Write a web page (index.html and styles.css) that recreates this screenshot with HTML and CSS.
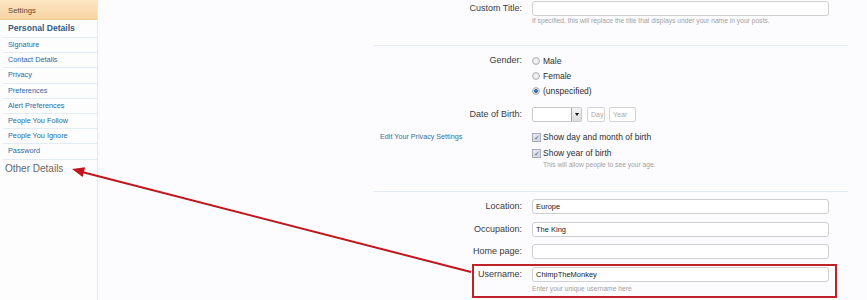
FILE: index.html
```html
<!DOCTYPE html>
<html>

<head>
	<link rel="stylesheet" href="styles.css">
</head>

<body>
	<div class="page">
		<div class="sidebar">
			<div class="sideHead">Settings</div>
			<div class="sideTitle">Personal Details</div>
			<ul class="sideNav">
				<li>Signature</li>
				<li>Contact Details</li>
				<li>Privacy</li>
				<li>Preferences</li>
				<li>Alert Preferences</li>
				<li>People You Follow</li>
				<li>People You Ignore</li>
				<li>Password</li>
			</ul>
			<div class="sideOther">Other Details</div>
		</div>

		<div class="main">
			<div class="form">
				<!-- Titel -->
				<div class="group groupTitle">
					<div class="row">
						<label class="label">Custom Title:</label>
						<div class="control">
							<div class="input"></div>
							<div class="hint">If specified, this will replace the title that displays under your name in your posts.</div>
						</div>
					</div>
				</div>

				<!-- Geschlecht / Geburtstag -->
				<div class="group groupPersonal">
					<div class="row">
						<label class="label">Gender:</label>
						<div class="control">
							<div class="option"><span class="radio"></span>Male</div>
							<div class="option"><span class="radio"></span>Female</div>
							<div class="option"><span class="radio checked"></span>(unspecified)</div>
						</div>
					</div>
					<div class="row rowDob">
						<label class="label">Date of Birth:</label>
						<div class="control dob">
							<div class="select"><span class="selectBtn"><span class="tri"></span></span></div>
							<div class="small day">Day</div>
							<div class="small year">Year</div>
						</div>
					</div>
					<div class="row rowPrivacy">
						<div class="label privacyLink">Edit Your Privacy Settings</div>
						<div class="control">
							<div class="option check"><span class="box">&#10003;</span>Show day and month of birth</div>
							<div class="option check"><span class="box">&#10003;</span>Show year of birth</div>
							<div class="hint indent">This will allow people to see your age.</div>
						</div>
					</div>
				</div>

				<!-- Weitere Angaben -->
				<div class="group groupMore">
					<div class="row field">
						<label class="label">Location:</label>
						<div class="control"><div class="input">Europe</div></div>
					</div>
					<div class="row field">
						<label class="label">Occupation:</label>
						<div class="control"><div class="input">The King</div></div>
					</div>
					<div class="row field">
						<label class="label">Home page:</label>
						<div class="control"><div class="input"></div></div>
					</div>
					<div class="row field marked">
						<label class="label">Username:</label>
						<div class="control">
							<div class="input">ChimpTheMonkey</div>
							<div class="hint">Enter your unique username here</div>
						</div>
					</div>
				</div>
			</div>
		</div>

		<svg class="arrow" width="867" height="300" viewBox="0 0 867 300">
			<line x1="471" y1="272" x2="82" y2="172" stroke="#c0161d" stroke-width="2" />
			<polygon points="72,169 85.2,167.2 82.6,177" fill="#c0161d" />
		</svg>
	</div>
</body>

</html>
```

FILE: styles.css
```css
body {
	margin: 0;
	background-color: #fcfcfe;
	font-family: "Liberation Sans", Arial, sans-serif;
	color: #444;
	overflow: hidden;
}

.page {
	display: flex;
	position: relative;
	width: 867px;
	height: 300px;
}

/* Seitenleiste */
.sidebar {
	width: 97px;
	height: 300px;
	border-right: 1px solid #e2e8f1;
	background-color: #fdfdfe;
}

.sideHead {
	height: 19px;
	line-height: 22px;
	padding-left: 8px;
	font-size: 7.7px;
	color: #5e4a33;
	background: linear-gradient(#fce6c4, #f7d4a2);
	border-bottom: 1px solid #efcb95;
}

.sideTitle {
	height: 17px;
	line-height: 17px;
	margin-left: 3px;
	padding-left: 5px;
	font-size: 8.6px;
	font-weight: bold;
	color: #2f5b82;
	border-bottom: 1px solid #e4ebf2;
}

.sideNav {
	list-style: none;
	margin: 0 0 0 3px;
	padding: 0;
}

.sideNav li {
	height: 14.2px;
	line-height: 14px;
	padding-left: 5px;
	font-size: 7.3px;
	color: #2a6aa0;
	border-bottom: 1px solid #e4ebf2;
}

.sideOther {
	margin-top: 2px;
	padding-left: 5px;
	font-size: 10px;
	line-height: 14px;
	color: #666;
}

/* Formular */
.main {
	flex: 1;
	padding-left: 275px;
}

.form {
	width: 475px;
}

.group {
	border-bottom: 1px solid #e4eaf6;
}

.groupTitle {
	padding-top: 1px;
	padding-bottom: 19px;
}

.groupPersonal {
	padding-top: 7px;
	padding-bottom: 22px;
}

.groupMore {
	padding-top: 7px;
	border-bottom: none;
}

.row {
	display: grid;
	grid-template-columns: 149px 297px;
	column-gap: 10px;
}

.label {
	text-align: right;
	font-size: 9px;
	line-height: 15px;
	color: #3a3a3a;
}

.input {
	box-sizing: border-box;
	height: 15px;
	line-height: 13px;
	padding-left: 3px;
	font-size: 7.5px;
	color: #222;
	background-color: #fff;
	border: 1px solid #cfcfcf;
	border-radius: 3px;
}

.hint {
	font-size: 6.7px;
	line-height: 10px;
	color: #a2a2a2;
}

.indent {
	padding-left: 11px;
	line-height: 8px;
}

.option {
	display: flex;
	align-items: center;
	height: 15px;
	font-size: 8.5px;
	color: #2e2e2e;
}

.radio {
	box-sizing: border-box;
	width: 8px;
	height: 8px;
	margin: 0 3px 0 0;
	border: 1px solid #b5b5b5;
	border-radius: 50%;
	background: radial-gradient(#fafafa, #d8d8d8);
}

.radio.checked {
	background: radial-gradient(circle, #2f6da6 0, #3d7ab3 1.6px, #cfd8e0 2.2px, #dde3e8 100%);
}

.check {
	height: 16px;
}

.box {
	box-sizing: border-box;
	width: 9px;
	height: 9px;
	margin-right: 2px;
	border: 1px solid #a9a9b3;
	background: linear-gradient(#e9e9f0, #d5d6e0);
	font-size: 7px;
	line-height: 7px;
	text-align: center;
	color: #3b63a8;
}

.rowDob {
	margin-top: 9px;
}

.dob {
	display: flex;
	gap: 5px;
}

.select {
	box-sizing: border-box;
	width: 50px;
	height: 15px;
	display: flex;
	justify-content: flex-end;
	background-color: #fff;
	border: 1px solid #c9c9c9;
	border-radius: 2px;
}

.selectBtn {
	box-sizing: border-box;
	width: 10px;
	height: 13px;
	display: flex;
	align-items: center;
	justify-content: center;
	background: linear-gradient(#f4f4f4, #dcdcdc);
	border-left: 1px solid #a8a8a8;
}

.tri {
	width: 0;
	height: 0;
	border-left: 2.5px solid transparent;
	border-right: 2.5px solid transparent;
	border-top: 3px solid #111;
}

.small {
	box-sizing: border-box;
	height: 15px;
	line-height: 13px;
	padding-left: 3px;
	font-size: 7px;
	color: #aaa;
	background-color: #fff;
	border: 1px solid #d3d3d3;
	border-radius: 2px;
}

.day {
	width: 18px;
}

.year {
	width: 27px;
	margin-left: -1px;
}

.rowPrivacy {
	margin-top: 7px;
}

.privacyLink {
	text-align: left;
	padding-left: 7px;
	font-size: 7.2px;
	color: #3a6d94;
}

.field {
	margin-bottom: 7.5px;
}

.marked {
	position: relative;
}

.marked .hint {
	margin-top: 2px;
}

/* rote Markierung */
.marked::after {
	content: "";
	position: absolute;
	left: 99px;
	top: -3px;
	width: 365px;
	height: 34px;
	box-sizing: border-box;
	border: 2px solid #c0222a;
}

.arrow {
	position: absolute;
	left: 0;
	top: 0;
	pointer-events: none;
}
```
